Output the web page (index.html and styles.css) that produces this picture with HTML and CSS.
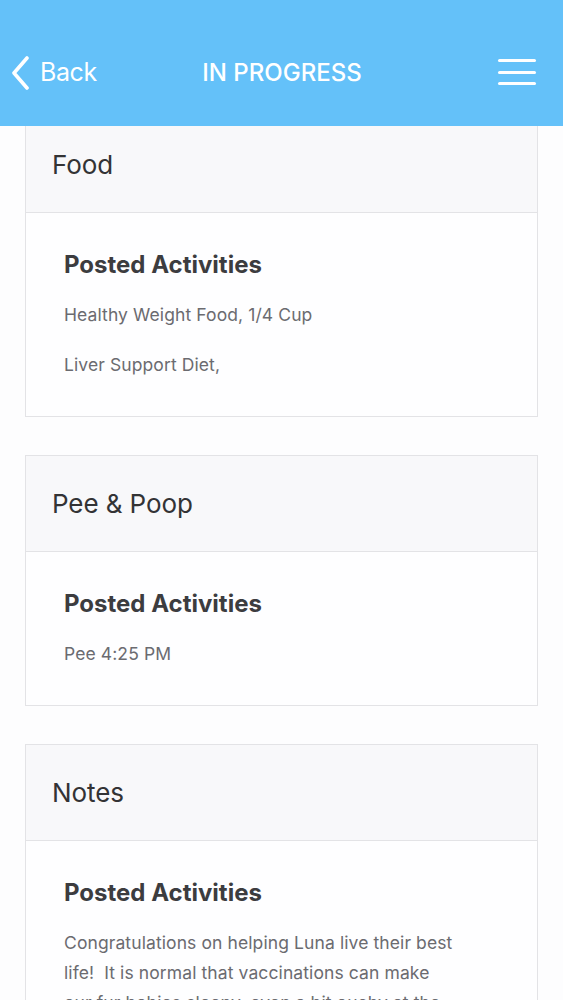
FILE: index.html
```html
<!DOCTYPE html>
<html lang="en">
<head>
<meta charset="utf-8">
<title>In Progress</title>
<link rel="stylesheet" href="styles.css">
</head>
<body>
<header class="nav">
  <div class="nav-row">
    <a class="back" href="#">
      <svg class="chev" width="20" height="34" viewBox="0 0 20 34" aria-hidden="true">
        <path d="M16 2 L3 17 L16 32" fill="none" stroke="#fff" stroke-width="3.6" stroke-linecap="round" stroke-linejoin="round"/>
      </svg>
      <span>Back</span>
    </a>
    <h1 class="title">IN PROGRESS</h1>
    <button class="menu" aria-label="Menu">
      <span></span><span></span><span></span>
    </button>
  </div>
</header>
<main class="list">
  <section class="card">
    <div class="card-head">Food</div>
    <div class="card-body">
      <h2 class="posted">Posted Activities</h2>
      <p class="item">Healthy Weight Food, 1/4 Cup</p>
      <p class="item">Liver Support Diet,</p>
    </div>
  </section>
  <section class="card">
    <div class="card-head">Pee &amp; Poop</div>
    <div class="card-body">
      <h2 class="posted">Posted Activities</h2>
      <p class="item">Pee 4:25 PM</p>
    </div>
  </section>
  <section class="card">
    <div class="card-head">Notes</div>
    <div class="card-body">
      <h2 class="posted">Posted Activities</h2>
      <p class="item">Congratulations on helping Luna live their best life!&nbsp; It is normal that vaccinations can make our fur babies sleepy, even a bit ouchy at the injection site.</p>
    </div>
  </section>
</main>
</body>
</html>
```

FILE: styles.css
```css
* { box-sizing: border-box; }
html, body { margin: 0; padding: 0; }
body {
  background: #fdfdfe;
  font-family: Inter, "Noto Sans", "Liberation Sans", sans-serif;
  width: 563px;
  overflow: hidden;
}
.nav {
  position: relative;
  z-index: 2;
  height: 126px;
  background: #64c1f9;
  padding-top: 40px;
}
.nav-row {
  height: 64px;
  display: flex;
  align-items: center;
  justify-content: space-between;
  padding: 0 27px 0 11px;
  position: relative;
}
.back {
  display: flex;
  align-items: center;
  gap: 9px;
  color: #fff;
  text-decoration: none;
  font-size: 25px;
  font-weight: 400;
  letter-spacing: -0.4px;
}
.chev { display: block; margin-top: 1px; }
.title {
  position: absolute;
  left: 0; right: 0;
  text-align: center;
  margin: 0;
  color: #fff;
  font-size: 24px;
  font-weight: 500;
  letter-spacing: 0;
  padding-left: 1px;
  pointer-events: none;
}
.menu {
  background: none;
  border: 0;
  padding: 0;
  width: 38px;
  display: flex;
  flex-direction: column;
  gap: 8.5px;
}
.menu span {
  display: block;
  height: 3px;
  background: #fff;
  border-radius: 2px;
}
.list {
  margin-top: -10px;
  padding: 0 25px 40px 25px;
  display: flex;
  flex-direction: column;
  gap: 38px;
}
.card {
  border: 1px solid #e3e3e6;
  background: #fefeff;
}
.card-head {
  height: 96px;
  background: #f8f8fa;
  border-bottom: 1px solid #e3e3e6;
  padding-left: 26px;
  display: flex;
  align-items: center;
  font-size: 26px;
  color: #333335;
  letter-spacing: -0.1px;
}
.card-body {
  padding: 36px 80px 36px 38px;
}
.posted {
  margin: 0;
  font-size: 24px;
  line-height: 32px;
  font-weight: 700;
  color: #3c3c3f;
  letter-spacing: 0;
}
.item {
  margin: 19px 0 0;
  font-size: 17.5px;
  line-height: 30px;
  color: #6b6b70;
  letter-spacing: 0.1px;
}
.item + .item {
  margin-top: 20px;
}
```
